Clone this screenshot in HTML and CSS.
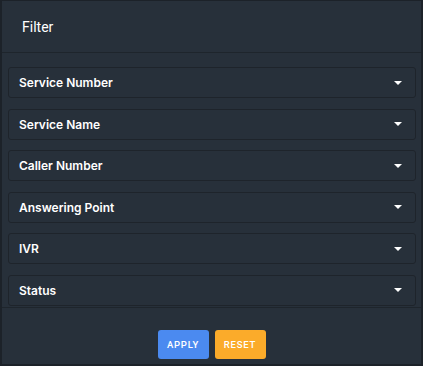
FILE: index.html
```html
<!DOCTYPE html>
<html lang="en">
<head>
    <meta charset="UTF-8">
    <meta name="viewport" content="width=device-width, initial-scale=1.0">
    <title>Filter</title>
    <link rel="stylesheet" href="styles.css">
</head>
<body>
    <div class="filter-panel">
        <header class="filter-header">Filter</header>
        <section class="filter-list">
            <div class="filter-select"><span>Service Number</span><i class="caret"></i></div>
            <div class="filter-select"><span>Service Name</span><i class="caret"></i></div>
            <div class="filter-select"><span>Caller Number</span><i class="caret"></i></div>
            <div class="filter-select"><span>Answering Point</span><i class="caret"></i></div>
            <div class="filter-select"><span>IVR</span><i class="caret"></i></div>
            <div class="filter-select"><span>Status</span><i class="caret"></i></div>
        </section>
        <footer class="filter-actions">
            <button class="btn btn-apply">APPLY</button>
            <button class="btn btn-reset">RESET</button>
        </footer>
    </div>
</body>
</html>
```

FILE: styles.css
```css
body {
    margin: 0;
    padding: 0;
    background-color: #1c2229;
    font-family: Roboto, "Liberation Sans", sans-serif;
    color: #ffffff;
}

.filter-panel {
    width: 419px;
    height: 363px;
    margin: 1px 1px 0 2px;
    background-color: #27303a;
    display: flex;
    flex-direction: column;
}

.filter-header {
    height: 51px;
    padding-left: 20px;
    display: flex;
    align-items: center;
    font-size: 14px;
    border-bottom: 1px solid #1e252c;
}

.filter-list {
    padding: 14px 5px 0 6px;
    display: flex;
    flex-direction: column;
    gap: 10.6px;
    height: 240px;
    border-bottom: 1px solid #1e252c;
}

.filter-select {
    height: 31px;
    box-sizing: border-box;
    border: 1px solid #1e242b;
    border-radius: 3px;
    display: flex;
    align-items: center;
    justify-content: space-between;
    padding: 0 13px 0 10px;
    font-family: Inter, Roboto, sans-serif;
    font-size: 12px;
    font-weight: 600;
}

.caret {
    width: 0;
    height: 0;
    border-left: 4px solid transparent;
    border-right: 4px solid transparent;
    border-top: 4px solid #ffffff;
}

.filter-actions {
    display: flex;
    justify-content: center;
    gap: 6px;
    padding-top: 22px;
}

.btn {
    width: 51px;
    height: 29px;
    border: none;
    border-radius: 3px;
    color: #ffffff;
    font-family: Roboto, "Liberation Sans", sans-serif;
    font-size: 9.5px;
    font-weight: 500;
    letter-spacing: 0.8px;
    padding: 0;
}

.btn-apply {
    background-color: #4b8af0;
}

.btn-reset {
    background-color: #fbab2a;
}
```
